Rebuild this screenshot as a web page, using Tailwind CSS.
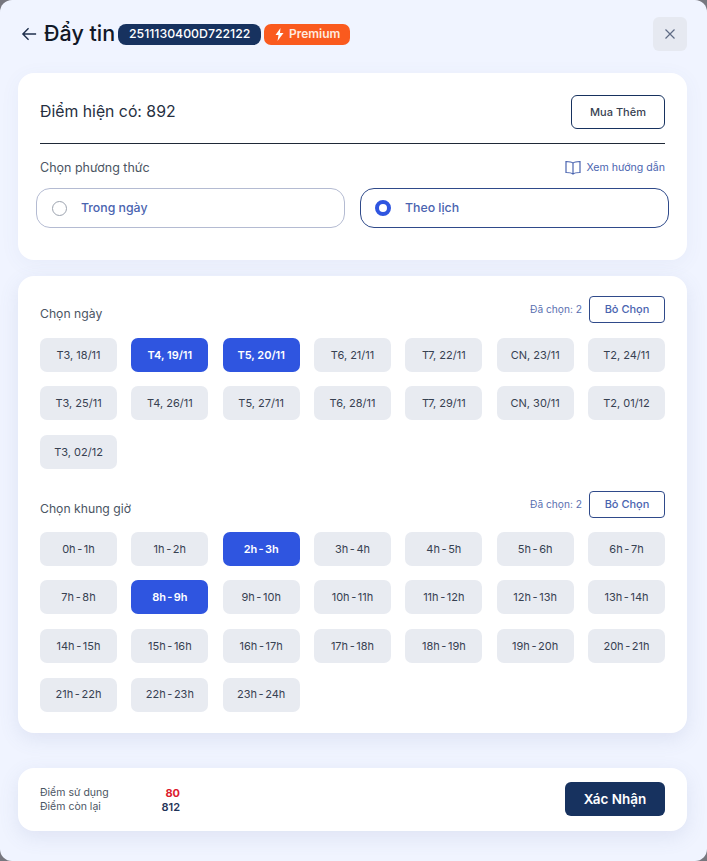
<!DOCTYPE html>
<html lang="en">

<head>
    <meta charset="UTF-8">
    <meta name="viewport" content="width=device-width, initial-scale=1.0">
    <title>Đẩy tin</title>
    <script src="https://cdn.jsdelivr.net/npm/@tailwindcss/browser@4"></script>
</head>

<body class="bg-[#77777f] font-['Inter',sans-serif]">
    <div class="h-[861px] w-[707px] overflow-hidden rounded-[12px] bg-[#f0f4ff] pr-[20px] pl-[18px] text-[#1f2937]">
        <!-- header -->
        <div class="flex h-[73px] items-center pb-[5px]">
            <svg class="ml-[3px] h-[18px] w-[17px] text-[#1f2f4d]" viewBox="0 0 18 18" fill="none" stroke="currentColor" stroke-width="1.5">
                <path d="M16 9H2M8 3 2 9l6 6" />
            </svg>
            <h1 class="ml-[6px] text-[21.5px] leading-none font-medium text-[#111827]">Đẩy tin</h1>
            <span class="ml-[3px] flex h-[21px] w-[143px] items-center justify-center rounded-[8px] bg-[#17325f] text-[12.300px] font-medium text-white">2511130400D722122</span>
            <span class="ml-[3px] flex h-[21px] w-[86px] items-center justify-center gap-[4px] rounded-[7px] bg-[#fa5a1e] text-[12px] font-semibold text-[#ffe9df]">
                <svg class="h-[13px] w-[11px]" viewBox="0 0 10 13" fill="#fff"><path d="M6 0 1 7h3l-1 6 6-8H5.500z" /></svg>
                Premium
            </span>
            <button class="ml-auto flex h-[34px] w-[34px] items-center justify-center rounded-[6px] bg-[#e6e9f1] text-[#5f6b85]">
                <svg class="h-[10px] w-[10px]" viewBox="0 0 10 10" fill="none" stroke="currentColor" stroke-width="1.200"><path d="m.5.5 9 9M9.500.5l-9 9" /></svg>
            </button>
        </div>

        <!-- points card -->
        <div class="h-[187px] rounded-[16px] bg-white px-[22px] pt-[22px] shadow-[0_4px_20px_rgba(90,105,160,0.06)]">
            <div class="flex h-[49px] items-start justify-between border-b border-[#1f2937]">
                <p class="mt-[5px] text-[15.800px] leading-[24px] text-[#262f3f]">Điểm hiện có: 892</p>
                <button class="h-[34px] w-[94px] rounded-[6px] border border-[#17325f] text-[11px] font-medium text-[#374151]">Mua Thêm</button>
            </div>
            <div class="mt-[15px] flex h-[18px] items-center justify-between">
                <p class="text-[12.5px] text-[#4b5563]">Chọn phương thức</p>
                <a class="flex items-center gap-[5px] text-[10.600px] text-[#4a64b0]">
                    <svg class="h-[15px] w-[16px]" viewBox="0 0 16 15" fill="none" stroke="currentColor" stroke-width="1.200"><path d="M8 3.200C6.800 2 5 1.500 1 1.500V12.500C5 12.500 6.800 13 8 14 9.200 13 11 12.500 15 12.500V1.500C11 1.500 9.200 2 8 3.200ZM8 3.200V14" /></svg>
                    Xem hướng dẫn
                </a>
            </div>
            <div class="-mx-[4px] mt-[11px] flex gap-[15px]">
                <label class="flex h-[40px] w-[309px] items-center rounded-[14px] border border-[#b4bbd2] pl-[15px] text-[12.300px] font-medium text-[#4a64b0]">
                    <span class="h-[15px] w-[15px] rounded-full border border-[#9ca3af]"></span>
                    <span class="ml-[14px]">Trong ngày</span>
                </label>
                <label class="flex h-[40px] w-[309px] items-center rounded-[14px] border border-[#2f4a8a] pl-[14px] text-[12.300px] font-medium text-[#4a64b0]">
                    <span class="h-[16px] w-[16px] rounded-full border-[4.5px] border-[#2f55e0] bg-white"></span>
                    <span class="ml-[14px]">Theo lịch</span>
                </label>
            </div>
        </div>

        <!-- date + time card -->
        <div class="mt-[16px] h-[457px] rounded-[16px] bg-white px-[22px] pt-[20px] shadow-[0_6px_20px_rgba(90,105,160,0.12)]">
            <div class="flex h-[27px] items-center justify-between">
                <p class="mt-[9px] text-[12.200px] text-[#4b5563]">Chọn ngày</p>
                <div class="flex items-center gap-[7px]">
                    <span class="text-[10.200px] text-[#5a6fb0]">Đã chọn: 2</span>
                    <button class="h-[27px] w-[76px] rounded-[4px] border border-[#2f4a8a] text-[11px] font-medium text-[#4a64b0]">Bỏ Chọn</button>
                </div>
            </div>
            <div class="mt-[15px] grid h-[131px] grid-cols-7 content-start gap-x-[14.330px] gap-y-[14.400px] text-[11px] text-[#374151]">
                <button class="h-[34px] rounded-[7px] bg-[#e8ebf1]">T3, 18/11</button>
                <button class="h-[34px] rounded-[7px] bg-[#2f55e0] font-semibold text-white">T4, 19/11</button>
                <button class="h-[34px] rounded-[7px] bg-[#2f55e0] font-semibold text-white">T5, 20/11</button>
                <button class="h-[34px] rounded-[7px] bg-[#e8ebf1]">T6, 21/11</button>
                <button class="h-[34px] rounded-[7px] bg-[#e8ebf1]">T7, 22/11</button>
                <button class="h-[34px] rounded-[7px] bg-[#e8ebf1]">CN, 23/11</button>
                <button class="h-[34px] rounded-[7px] bg-[#e8ebf1]">T2, 24/11</button>
                <button class="h-[34px] rounded-[7px] bg-[#e8ebf1]">T3, 25/11</button>
                <button class="h-[34px] rounded-[7px] bg-[#e8ebf1]">T4, 26/11</button>
                <button class="h-[34px] rounded-[7px] bg-[#e8ebf1]">T5, 27/11</button>
                <button class="h-[34px] rounded-[7px] bg-[#e8ebf1]">T6, 28/11</button>
                <button class="h-[34px] rounded-[7px] bg-[#e8ebf1]">T7, 29/11</button>
                <button class="h-[34px] rounded-[7px] bg-[#e8ebf1]">CN, 30/11</button>
                <button class="h-[34px] rounded-[7px] bg-[#e8ebf1]">T2, 01/12</button>
                <button class="h-[34px] rounded-[7px] bg-[#e8ebf1]">T3, 02/12</button>
            </div>

            <div class="mt-[22px] flex h-[27px] items-center justify-between">
                <p class="mt-[9px] text-[12.200px] text-[#4b5563]">Chọn khung giờ</p>
                <div class="flex items-center gap-[7px]">
                    <span class="text-[10.200px] text-[#5a6fb0]">Đã chọn: 2</span>
                    <button class="h-[27px] w-[76px] rounded-[4px] border border-[#2f4a8a] text-[11px] font-medium text-[#4a64b0]">Bỏ Chọn</button>
                </div>
            </div>
            <div class="mt-[13.900px] grid grid-cols-7 gap-x-[14.330px] gap-y-[14.550px] text-[11px] text-[#374151] *:[word-spacing:-1.500px]">
                <button class="h-[34px] rounded-[7px] bg-[#e8ebf1]">0h - 1h</button>
                <button class="h-[34px] rounded-[7px] bg-[#e8ebf1]">1h - 2h</button>
                <button class="h-[34px] rounded-[7px] bg-[#2f55e0] font-semibold text-white">2h - 3h</button>
                <button class="h-[34px] rounded-[7px] bg-[#e8ebf1]">3h - 4h</button>
                <button class="h-[34px] rounded-[7px] bg-[#e8ebf1]">4h - 5h</button>
                <button class="h-[34px] rounded-[7px] bg-[#e8ebf1]">5h - 6h</button>
                <button class="h-[34px] rounded-[7px] bg-[#e8ebf1]">6h - 7h</button>
                <button class="h-[34px] rounded-[7px] bg-[#e8ebf1]">7h - 8h</button>
                <button class="h-[34px] rounded-[7px] bg-[#2f55e0] font-semibold text-white">8h - 9h</button>
                <button class="h-[34px] rounded-[7px] bg-[#e8ebf1]">9h - 10h</button>
                <button class="h-[34px] rounded-[7px] bg-[#e8ebf1]">10h - 11h</button>
                <button class="h-[34px] rounded-[7px] bg-[#e8ebf1]">11h - 12h</button>
                <button class="h-[34px] rounded-[7px] bg-[#e8ebf1]">12h - 13h</button>
                <button class="h-[34px] rounded-[7px] bg-[#e8ebf1]">13h - 14h</button>
                <button class="h-[34px] rounded-[7px] bg-[#e8ebf1]">14h - 15h</button>
                <button class="h-[34px] rounded-[7px] bg-[#e8ebf1]">15h - 16h</button>
                <button class="h-[34px] rounded-[7px] bg-[#e8ebf1]">16h - 17h</button>
                <button class="h-[34px] rounded-[7px] bg-[#e8ebf1]">17h - 18h</button>
                <button class="h-[34px] rounded-[7px] bg-[#e8ebf1]">18h - 19h</button>
                <button class="h-[34px] rounded-[7px] bg-[#e8ebf1]">19h - 20h</button>
                <button class="h-[34px] rounded-[7px] bg-[#e8ebf1]">20h - 21h</button>
                <button class="h-[34px] rounded-[7px] bg-[#e8ebf1]">21h - 22h</button>
                <button class="h-[34px] rounded-[7px] bg-[#e8ebf1]">22h - 23h</button>
                <button class="h-[34px] rounded-[7px] bg-[#e8ebf1]">23h - 24h</button>
            </div>
        </div>

        <!-- footer -->
        <div class="mt-[35px] flex h-[63px] items-center justify-between rounded-[16px] bg-white px-[22px] shadow-[0_6px_20px_rgba(90,105,160,0.12)]">
            <div class="grid w-[140px] grid-cols-[1fr_auto] text-[10.5px] leading-[14px] text-[#4b5563]">
                <span>Điểm sử dụng</span>
                <span class="text-right text-[11px] font-bold text-[#dc1c2e]">80</span>
                <span>Điểm còn lại</span>
                <span class="text-right text-[11px] font-semibold text-[#1f3358]">812</span>
            </div>
            <button class="mb-[2px] h-[34px] w-[100px] rounded-[6px] bg-[#17325f] pt-[1px] text-[13.500px] font-semibold text-white">Xác Nhận</button>
        </div>
    </div>
</body>

</html>
